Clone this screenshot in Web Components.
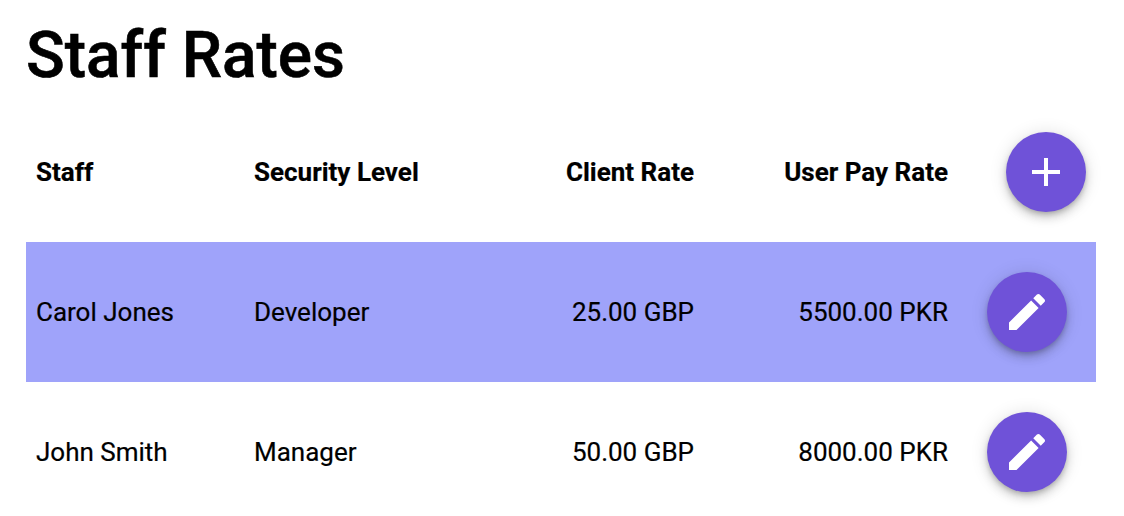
<!DOCTYPE html>
<html>
<head>
<meta charset="utf-8">
<title>Staff Rates</title>
<style>
  html, body { margin: 0; background: #fff; overflow: hidden; }
  body { font-family: Roboto, "Liberation Sans", sans-serif; color: #000; }
</style>
</head>
<body>
<staff-rates>
  <rate-row heading>
    <span slot="staff">Staff</span>
    <span slot="level">Security Level</span>
    <span slot="client">Client Rate</span>
    <span slot="pay">User Pay Rate</span>
    <fab-button slot="action" icon="add" class="end"></fab-button>
  </rate-row>
  <rate-row selected>
    <span slot="staff">Carol Jones</span>
    <span slot="level">Developer</span>
    <span slot="client">25.00 GBP</span>
    <span slot="pay">5500.00 PKR</span>
    <fab-button slot="action" icon="edit"></fab-button>
  </rate-row>
  <rate-row>
    <span slot="staff">John Smith</span>
    <span slot="level">Manager</span>
    <span slot="client">50.00 GBP</span>
    <span slot="pay">8000.00 PKR</span>
    <fab-button slot="action" icon="edit"></fab-button>
  </rate-row>
</staff-rates>

<script>
const ICONS = {
  add: 'M19 13h-6v6h-2v-6H5v-2h6V5h2v6h6v2z',
  edit: 'M3 17.25V21h3.75L17.81 9.94l-3.75-3.75L3 17.25zM20.71 7.04c.39-.39.39-1.02 0-1.41l-2.34-2.34c-.39-.39-1.02-.39-1.41 0l-1.83 1.83 3.75 3.75 1.83-1.83z'
};

class FabButton extends HTMLElement {
  constructor() {
    super();
    this.attachShadow({ mode: 'open' });
    this.shadowRoot.innerHTML = `
    <style>
      :host {
        display: flex;
        align-items: center;
        justify-content: center;
        width: 80px;
        height: 80px;
        border-radius: 50%;
        background: #6f52d8;
        box-shadow: 0 3px 5px -1px rgba(0,0,0,.2), 0 6px 10px 0 rgba(0,0,0,.14), 0 1px 18px 0 rgba(0,0,0,.12);
        cursor: pointer;
      }
      svg { width: 48px; height: 48px; fill: #fff; }
    </style>
    <svg viewBox="0 0 24 24"><path d="${ICONS[this.getAttribute('icon')]}"></path></svg>
    `;
  }
}
customElements.define('fab-button', FabButton);

class RateRow extends HTMLElement {
  constructor() {
    super();
    this.attachShadow({ mode: 'open' });
    this.shadowRoot.innerHTML = `
    <style>
      :host {
        display: grid;
        grid-template-columns: 218px 256px 204px 254px 138px;
        align-items: center;
        height: 140px;
        font-size: 26px;
        -webkit-text-stroke: 0.2px #000;
      }
      :host([heading]) { font-weight: 700; }
      :host([selected]) { background: #9fa3fa; }
      .cell { padding: 0 10px; }
      .num { text-align: right; }
      .action { display: flex; justify-content: center; }
      :host([heading]) .action { justify-content: flex-end; }
    </style>
    <div class="cell"><slot name="staff"></slot></div>
    <div class="cell"><slot name="level"></slot></div>
    <div class="cell num"><slot name="client"></slot></div>
    <div class="cell num"><slot name="pay"></slot></div>
    <div class="cell action"><slot name="action"></slot></div>
    `;
  }
}
customElements.define('rate-row', RateRow);

class StaffRates extends HTMLElement {
  constructor() {
    super();
    this.attachShadow({ mode: 'open' });
    this.shadowRoot.innerHTML = `
    <style>
      :host {
        display: block;
        width: 1070px;
        padding: 0 0 0 26px;
      }
      h1 {
        margin: 0;
        height: 102px;
        padding-top: 18px;
        box-sizing: border-box;
        font-size: 64px;
        line-height: 75px;
        font-weight: 500;
        -webkit-text-stroke: 0.6px #000;
      }
    </style>
    <h1>Staff Rates</h1>
    <slot></slot>
    `;
  }
}
customElements.define('staff-rates', StaffRates);
</script>
</body>
</html>
